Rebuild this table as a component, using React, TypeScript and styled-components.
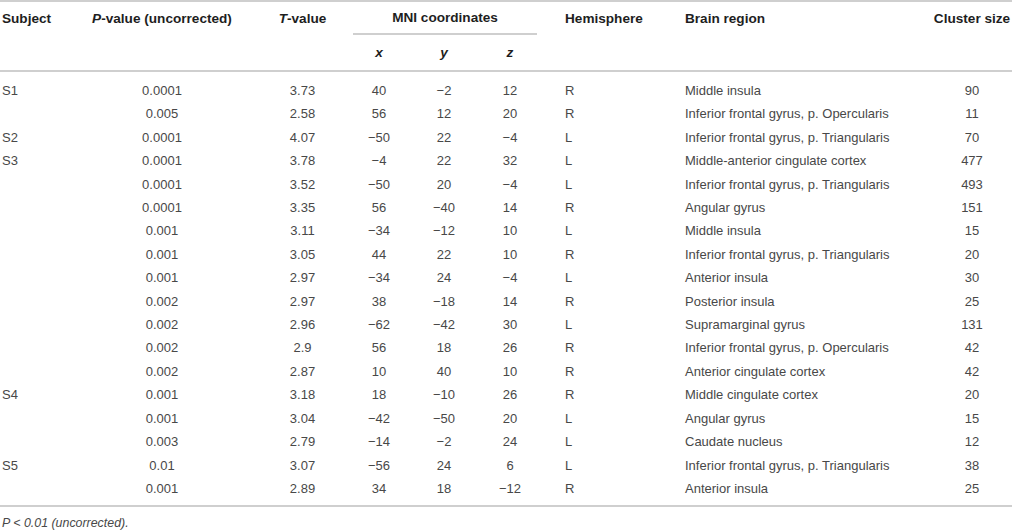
import styled, { createGlobalStyle } from 'styled-components'

const GlobalStyle = createGlobalStyle`
  html, body {
    margin: 0;
    padding: 0;
    background: #fff;
  }
  body {
    font-family: 'Liberation Sans', Arial, sans-serif;
    color: #4a4a4a;
  }
`

type Row = [string, string, string, string, string, string, string, string, string]

const rows: Row[] = [
  ['S1', '0.0001', '3.73', '40', '−2', '12', 'R', 'Middle insula', '90'],
  ['', '0.005', '2.58', '56', '12', '20', 'R', 'Inferior frontal gyrus, p. Opercularis', '11'],
  ['S2', '0.0001', '4.07', '−50', '22', '−4', 'L', 'Inferior frontal gyrus, p. Triangularis', '70'],
  ['S3', '0.0001', '3.78', '−4', '22', '32', 'L', 'Middle-anterior cingulate cortex', '477'],
  ['', '0.0001', '3.52', '−50', '20', '−4', 'L', 'Inferior frontal gyrus, p. Triangularis', '493'],
  ['', '0.0001', '3.35', '56', '−40', '14', 'R', 'Angular gyrus', '151'],
  ['', '0.001', '3.11', '−34', '−12', '10', 'L', 'Middle insula', '15'],
  ['', '0.001', '3.05', '44', '22', '10', 'R', 'Inferior frontal gyrus, p. Triangularis', '20'],
  ['', '0.001', '2.97', '−34', '24', '−4', 'L', 'Anterior insula', '30'],
  ['', '0.002', '2.97', '38', '−18', '14', 'R', 'Posterior insula', '25'],
  ['', '0.002', '2.96', '−62', '−42', '30', 'L', 'Supramarginal gyrus', '131'],
  ['', '0.002', '2.9', '56', '18', '26', 'R', 'Inferior frontal gyrus, p. Opercularis', '42'],
  ['', '0.002', '2.87', '10', '40', '10', 'R', 'Anterior cingulate cortex', '42'],
  ['S4', '0.001', '3.18', '18', '−10', '26', 'R', 'Middle cingulate cortex', '20'],
  ['', '0.001', '3.04', '−42', '−50', '20', 'L', 'Angular gyrus', '15'],
  ['', '0.003', '2.79', '−14', '−2', '24', 'L', 'Caudate nucleus', '12'],
  ['S5', '0.01', '3.07', '−56', '24', '6', 'L', 'Inferior frontal gyrus, p. Triangularis', '38'],
  ['', '0.001', '2.89', '34', '18', '−12', 'R', 'Anterior insula', '25'],
]

// column layout: width, alignment, padding
const cols = [
  { w: 90, align: 'left', pl: 2, pr: 0 },
  { w: 162, align: 'center', pl: 0, pr: 18 },
  { w: 101, align: 'center', pl: 0, pr: 0 },
  { w: 52, align: 'center', pl: 0, pr: 0 },
  { w: 78, align: 'center', pl: 0, pr: 0 },
  { w: 54, align: 'center', pl: 0, pr: 0 },
  { w: 147, align: 'left', pl: 28, pr: 0 },
  { w: 248, align: 'left', pl: 1, pr: 0 },
  { w: 80, align: 'center', pl: 0, pr: 0 },
]

const Wrap = styled.div`
  width: 1012px;
  height: 530px;
  overflow: hidden;
`

const Table = styled.table`
  width: 1012px;
  table-layout: fixed;
  border-collapse: collapse;
  border-top: 2px solid #cfcfcf;
  border-bottom: 2px solid #cfcfcf;
  font-size: 13px;
`

const Head = styled.thead`
  border-bottom: 2px solid #cfcfcf;
`

const Th = styled.th<{ $col: number; $top?: boolean }>`
  padding: 0 ${(p) => cols[p.$col].pr}px 0 ${(p) => cols[p.$col].pl}px;
  text-align: ${(p) => cols[p.$col].align};
  vertical-align: ${(p) => (p.$top ? 'top' : 'middle')};
  padding-top: ${(p) => (p.$top ? 9 : 0)}px;
  font-size: 13.6px;
  font-weight: bold;
  color: #1e1e1e;
  white-space: nowrap;
  line-height: 15px;
`

const GroupTh = styled.th`
  height: 31px;
  padding: 0;
  text-align: center;
  vertical-align: middle;
  font-size: 13.6px;
  font-weight: bold;
  color: #1e1e1e;
  line-height: 15px;
  border-bottom: 2px solid #cfcfcf;
`

const AxisTh = styled.th`
  height: 35px;
  padding: 0;
  text-align: center;
  font-size: 13.6px;
  font-style: italic;
  font-weight: bold;
  color: #1e1e1e;
`

const Body = styled.tbody`
  tr:first-child td {
    padding-top: 7px;
  }
  tr:last-child td {
    padding-bottom: 5px;
  }
`

const Td = styled.td<{ $col: number }>`
  height: 23.4px;
  padding: 0 ${(p) => cols[p.$col].pr}px 0 ${(p) => cols[p.$col].pl}px;
  text-align: ${(p) => cols[p.$col].align};
  white-space: nowrap;
  line-height: 23.4px;
  color: #484848;
`

const Note = styled.p`
  margin: 9px 0 0 2px;
  font-size: 12.4px;
  font-style: italic;
  color: #484848;
`

export default function App() {
  return (
    <Wrap>
      <GlobalStyle />
      <Table>
        <colgroup>
          {cols.map((c, i) => (
            <col key={i} style={{ width: c.w }} />
          ))}
        </colgroup>
        <Head>
          <tr>
            <Th $col={0} $top rowSpan={2}>Subject</Th>
            <Th $col={1} $top rowSpan={2}>
              <i>P</i>-value (uncorrected)
            </Th>
            <Th $col={2} $top rowSpan={2}>
              <i>T</i>-value
            </Th>
            <GroupTh colSpan={3}>MNI coordinates</GroupTh>
            <Th $col={6} $top rowSpan={2}>Hemisphere</Th>
            <Th $col={7} $top rowSpan={2}>Brain region</Th>
            <Th $col={8} $top rowSpan={2}>Cluster size</Th>
          </tr>
          <tr>
            <AxisTh>x</AxisTh>
            <AxisTh>y</AxisTh>
            <AxisTh>z</AxisTh>
          </tr>
        </Head>
        <Body>
          {rows.map((r, i) => (
            <tr key={i}>
              {r.map((v, j) => (
                <Td key={j} $col={j}>
                  {v}
                </Td>
              ))}
            </tr>
          ))}
        </Body>
      </Table>
      <Note>P &lt; 0.01 (uncorrected).</Note>
    </Wrap>
  )
}
